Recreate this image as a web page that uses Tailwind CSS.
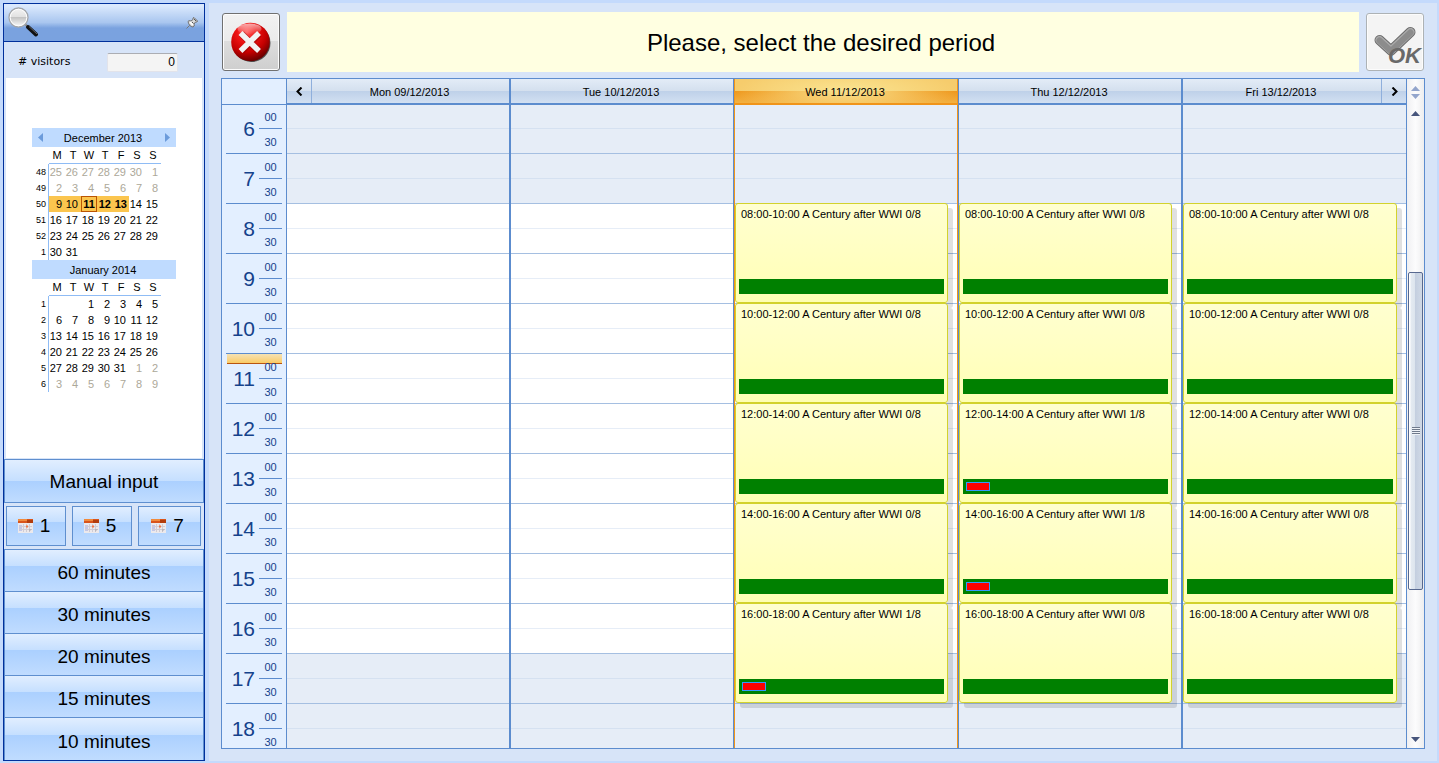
<!DOCTYPE html>
<html lang="en">
<head>
    <meta charset="UTF-8">
    <meta name="viewport" content="width=device-width, initial-scale=1.0">
    <title>Select period</title>
    <script src="https://cdn.jsdelivr.net/npm/@tailwindcss/browser@4"></script>
</head>
<body class="h-screen flex gap-1 pt-[3px] pl-[3px] pr-0.5 pb-0.5 overflow-hidden bg-[#c4dafc] text-black text-[11px] font-['Liberation_Sans',Arial,sans-serif]">

    <!-- Sidebar -->
    <aside class="w-[202px] shrink-0 flex flex-col border border-[#00309c] bg-[#d7e4f8]">
        <div class="h-[38px] shrink-0 flex items-center justify-between pl-1 pr-1.5 border-b border-[#00309c] bg-linear-to-b from-[#dbe9fd] from-5% via-[#a9c6ef] via-50% to-[#7aa2df] to-65%">
            <svg class="w-8 h-8" viewBox="0 0 32 32">
                <defs>
                    <linearGradient id="glass" x1="0" y1="0" x2="0" y2="1">
                        <stop offset="0" stop-color="#f4f4f4"/>
                        <stop offset="0.45" stop-color="#e2e2e2"/>
                        <stop offset="0.5" stop-color="#c4c4c4"/>
                        <stop offset="1" stop-color="#fdfdfd"/>
                    </linearGradient>
                </defs>
                <path d="M17 17l4 4" stroke="#8d8d8d" stroke-width="2"/>
                <path d="M20 20L28 27.500" stroke="#111" stroke-width="4" stroke-linecap="round"/>
                <path d="M21 19.500l8 7.500" stroke="#777" stroke-width="0.800"/>
                <circle cx="10.500" cy="10.500" r="9.500" fill="url(#glass)" stroke="#a3a6aa" stroke-width="1.300"/>
                <circle cx="10.500" cy="10.500" r="8.300" fill="none" stroke="#fff" stroke-width="1"/>
            </svg>
            <button type="button" aria-label="Pin panel">
                <svg class="w-3 h-3" viewBox="0 0 12 12">
                    <path d="M0.500 11.500L4 8" stroke="#777" stroke-width="1"/>
                    <path d="M2 4.500Q2.500 3 5 4L7 2.500Q6.500 0.500 8 0.500L11.500 4Q11.500 5.500 9.500 5L8 7Q9 9.500 7 10Q3 9.500 2 4.500z" fill="#d9d9d9" stroke="#666" stroke-width="0.900"/>
                    <path d="M4 5l3 3" stroke="#fff" stroke-width="1.500"/>
                    <path d="M8 2l2 2M6 5l1.500 1.500" stroke="#555" stroke-width="1"/>
                </svg>
            </button>
        </div>

        <div class="h-9 shrink-0 flex items-center pt-1 pl-3.5 pr-[26px] justify-between">
            <label for="visitors" class="font-['DejaVu_Sans',sans-serif]"># visitors</label>
            <input id="visitors" type="text" value="0" class="w-[71px] h-[19px] px-0.5 text-right text-xs bg-[#f4f4f4] border border-[#e2e3ea] border-t-[#abadb3] rounded-xs">
        </div>

        <div class="flex-1 min-h-0 mx-0.5 mb-px pt-[50px] pl-6.5 bg-white" id="mini-calendars"></div>

        <button type="button" class="h-11 shrink-0 border border-[#5f8fcf] text-[19px] leading-none bg-[linear-gradient(#e1eeff,#c5dfff_50%,#abd0ff_50%,#c0dcff)]">Manual input</button>

        <div class="shrink-0 flex gap-1.5 py-[3px] pl-0.5 pr-[3px]" id="day-buttons"></div>

        <div class="shrink-0 flex flex-col" id="length-buttons"></div>
    </aside>

    <!-- Main panel -->
    <main class="flex-1 min-w-0 flex flex-col gap-1.5 px-3 pt-[9px] pb-3 bg-[#d7e4f8]">
        <div class="shrink-0 flex items-center justify-between gap-[7px] px-px">
            <button type="button" aria-label="Cancel" class="w-[58px] h-[58px] shrink-0 flex items-center justify-center border border-[#707070] rounded-[3px] shadow-[inset_0_0_0_1px_#fcfcfc] bg-[linear-gradient(#f2f2f2,#ebebeb_48%,#dddddd_48%,#cfcfcf)]">
                <svg class="w-[42px] h-[42px]" viewBox="0 0 42 42">
                    <defs>
                        <radialGradient id="ball" cx="0.4" cy="0.25" r="0.8">
                            <stop offset="0" stop-color="#ff5a5a"/>
                            <stop offset="0.3" stop-color="#f01414"/>
                            <stop offset="0.65" stop-color="#c40000"/>
                            <stop offset="1" stop-color="#560000"/>
                        </radialGradient>
                        <linearGradient id="shine" x1="0" y1="0" x2="0" y2="1">
                            <stop offset="0" stop-color="#fff" stop-opacity="0.65"/>
                            <stop offset="1" stop-color="#fff" stop-opacity="0"/>
                        </linearGradient>
                    </defs>
                    <circle cx="21.500" cy="22" r="19" fill="#3a3a3a" opacity="0.85"/>
                    <circle cx="20.500" cy="21" r="19.300" fill="url(#ball)"/>
                    <ellipse cx="19.500" cy="8" rx="12" ry="5.500" fill="url(#shine)"/>
                    <path d="M11.500 13L29 30M29 13L11.500 30" stroke="#8a0000" stroke-width="7" opacity="0.5"/>
                    <path d="M10.500 12L29 30M29 12L10.500 30" stroke="#f2f2f2" stroke-width="5.500"/>
                </svg>
            </button>
            <h1 class="flex-1 h-15 flex items-center justify-center bg-[#ffffe1] text-2xl pt-0.5 pr-1">Please, select the desired period</h1>
            <button type="button" disabled class="relative w-[58px] h-[58px] shrink-0 border border-[#adb2b5] rounded-[3px] shadow-[inset_0_0_0_1px_#fcfcfc] bg-[#f4f4f4]">
                <svg class="w-14 h-14" viewBox="0 0 56 56">
                    <path d="M12.500 26L24 36.500L43.500 18" fill="none" stroke="#6b6b6b" stroke-width="10" stroke-linecap="round" stroke-linejoin="round"/>
                    <path d="M12.500 26L24 36.500L43.500 18" fill="none" stroke="#aaa" stroke-width="8" stroke-linecap="round" stroke-linejoin="round"/>
                    <path d="M12.500 26.500L24 37L43.500 18.500" fill="none" stroke="#8c8c8c" stroke-width="6" stroke-linecap="round" stroke-linejoin="round"/>
                </svg>
                <span class="absolute right-0.5 bottom-1 text-[22px] leading-5 font-bold italic text-[#696969]">OK</span>
            </button>
        </div>

        <!-- Schedule -->
        <section class="flex-1 min-h-0 flex border border-[#5c8cce]">
            <div class="w-16 shrink-0 flex flex-col bg-[#e3efff] text-[#15428b]">
                <div class="relative h-[25px] shrink-0 shadow-[0_1px_0_#5c8cce]"></div>
                <div class="relative flex-1 min-h-0 overflow-hidden px-1" id="hours">
                    <div class="absolute left-[5px] right-1 top-[250px] h-2.5 border-b border-[#b85410] bg-linear-to-b from-[#f5e2b4] to-[#fbcb62]"></div>
                </div>
            </div>
            <div class="flex-1 min-w-0 grid grid-cols-5" id="days"></div>

            <div class="w-[18px] shrink-0 flex flex-col items-center border-l border-[#5c8cce] bg-linear-to-r from-[#f0f0f2] via-[#fcfcfd] to-[#eeeeef]">
                <div class="h-6.5 shrink-0 flex flex-col items-center justify-center gap-[3px]">
                    <svg class="w-[9px] h-[5px]" viewBox="0 0 9 5"><path d="M0 5L4.500 0L9 5z" fill="#93a5cc"/></svg>
                    <svg class="w-[9px] h-[5px]" viewBox="0 0 9 5"><path d="M0 0L4.500 5L9 0z" fill="#93a5cc"/></svg>
                </div>
                <button type="button" aria-label="Scroll up" class="h-4 shrink-0"><svg class="w-[9px] h-[5px]" viewBox="0 0 9 5"><path d="M0 5L4.500 0L9 5z" fill="#47557c"/></svg></button>
                <div class="grow-[152] basis-0"></div>
                <div class="grow-[317] basis-0 w-[15px] flex items-center justify-center border border-[#57688f] rounded-xs bg-[linear-gradient(90deg,#fff_1px,#e4eaf1_2px,#dde5ee_45%,#c3cedf_45%,#d0d9e6)]">
                    <div class="w-2 h-2 bg-[repeating-linear-gradient(#6f7a8c_0_1px,#eef2f7_1px_2px)]"></div>
                </div>
                <div class="grow-[141] basis-0"></div>
                <button type="button" aria-label="Scroll down" class="h-4.5 shrink-0"><svg class="w-[9px] h-[5px]" viewBox="0 0 9 5"><path d="M0 0L4.500 5L9 0z" fill="#47557c"/></svg></button>
            </div>
        </section>
    </main>

    <script>
        // Mini calendars
        const months = [
            { title: 'December 2013', nav: true, first: 25, total: 31, weeks: [48, 49, 50, 51, 52, 1], lead: 6 },
            { title: 'January 2014', nav: false, first: 0, total: 31, weeks: [1, 2, 3, 4, 5, 6], lead: 2 }
        ];
        const selected = [9, 10, 11, 12, 13];

        function monthCells(m) {
            const cells = [];
            for (let i = 0; i < m.lead; i++) cells.push({ day: m.first ? m.first + i : '', dim: true });
            for (let d = 1; d <= m.total; d++) cells.push({ day: d, dim: m.nav && d < 9 });
            for (let d = 1; !m.nav && cells.length < 42; d++) cells.push({ day: d, dim: true });
            while (cells.length < 42) cells.push({ day: '', dim: true });
            return cells;
        }

        function dayCell(cell, m) {
            const hit = m.nav && !cell.dim && selected.includes(cell.day);
            let cls = 'p-0 pr-[3px]';
            if (cell.dim) cls += ' text-[#aca899]';
            if (hit) cls += ' bg-[#fbc54e]';
            if (hit && cell.day > 10) cls = 'p-0 pr-0.5 font-bold bg-[#fbc54e]';
            if (hit && cell.day === 11) cls += ' outline outline-[#bb5503] -outline-offset-1';
            return `<td class="${cls}">${cell.day}</td>`;
        }

        document.querySelector('#mini-calendars').innerHTML = months.map(m => {
            const cells = monthCells(m);
            const rows = m.weeks.map((week, i) => `
                <tr class="h-4">
                    <th scope="row" class="p-0 pr-0.5 border-r border-[#8fbcf5] text-[9px] font-normal text-right">${week}</th>
                    ${cells.slice(i * 7, i * 7 + 7).map(c => dayCell(c, m)).join('')}
                </tr>`).join('');
            return `
                <div class="w-36 h-[19px] flex items-center px-1.5 bg-[#bfdbff]">
                    ${m.nav ? '<button type="button" aria-label="Previous month"><svg class="w-[5px] h-[9px]" viewBox="0 0 5 9"><path d="M5 0L0 4.500L5 9z" fill="#6b9bdb"/></svg></button>' : ''}
                    <span class="flex-1 text-center pt-0.5 pr-0.5">${m.title}</span>
                    ${m.nav ? '<button type="button" aria-label="Next month"><svg class="w-[5px] h-[9px]" viewBox="0 0 5 9"><path d="M0 0L5 4.500L0 9z" fill="#6b9bdb"/></svg></button>' : ''}
                </div>
                <table class="w-[129px] table-fixed border-separate border-spacing-0 leading-[15px] text-right">
                    <thead>
                        <tr class="h-[17px]">
                            <td class="w-[17px] p-0"></td>
                            ${['M', 'T', 'W', 'T', 'F', 'S', 'S'].map(d => `<th scope="col" class="p-0 border-b border-[#8fbcf5] font-normal text-center">${d}</th>`).join('')}
                        </tr>
                    </thead>
                    <tbody>${rows}</tbody>
                </table>`;
        }).join('');

        // Buttons for 1, 5 and 7 days
        document.querySelector('#day-buttons').innerHTML = [1, 5, 7].map(n => `
            <button type="button" class="w-15 last:w-auto last:flex-1 h-10 flex items-center justify-center gap-[7px] pr-1 border border-[#5f8fcf] text-[19px] bg-[linear-gradient(#e1eeff,#c5dfff_40%,#abd0ff_40%,#c0dcff)]">
                <svg class="w-[15px] h-3.5" viewBox="0 0 15 14">
                    <path d="M0 3h15v11h-15z" fill="#ece9ec"/>
                    <path d="M0 0h15v4h-15z" fill="#d9541a"/>
                    <path d="M0 0h9v2h-9z" fill="#f08a3c"/>
                    <path d="M9 1h6v3h-6z" fill="#b23c0c"/>
                    <path d="M1 6h3v6h-3z" fill="#c3c6e6"/>
                    <path d="M5.500 5v8M8.500 5v8M11.500 5v8M1 7.500h13M1 10.500h13" stroke="#d0ccd4" stroke-width="1"/>
                    <path d="M8 6.500h2v2h-2z" fill="#f07a4a"/>
                    <path d="M11 10h3l-3 3z" fill="#b9b6bc"/>
                </svg>
                <span>${n}</span>
            </button>`).join('');

        // Slot lengths
        document.querySelector('#length-buttons').innerHTML = [60, 30, 20, 15, 10].map(n => `
            <button type="button" class="h-[42px] last:h-[43px] border border-b-0 border-[#5f8fcf] pt-1 text-[19px] leading-none bg-[linear-gradient(#e1eeff,#c5dfff_40%,#abd0ff_40%,#c0dcff)]">${n} minutes</button>`).join('');

        // Hours
        const hours = [6, 7, 8, 9, 10, 11, 12, 13, 14, 15, 16, 17, 18];
        document.querySelector('#hours').innerHTML += hours.map(h => `
            <div class="relative h-[50px] flex items-center justify-end gap-1 border-b border-[#5c8cce]">
                <span class="text-[21px] leading-none">${h}</span>
                <div class="w-[23px] h-[49px] text-center">
                    <div class="h-[25px] leading-[26px] border-b border-[#5c8cce]">00</div>
                    <div class="h-6 leading-[26px]">30</div>
                </div>
            </div>`).join('');

        // Days with booked places per event
        const days = [
            { label: 'Mon 09/12/2013' },
            { label: 'Tue 10/12/2013' },
            { label: 'Wed 11/12/2013', today: true, booked: [0, 0, 0, 0, 1] },
            { label: 'Thu 12/12/2013', booked: [0, 0, 1, 1, 0] },
            { label: 'Fri 13/12/2013', booked: [0, 0, 0, 0, 0] }
        ];
        const pad = n => String(n).padStart(2, '0');

        const slots = hours.map(h => {
            const open = h >= 8 && h < 17;
            return `
                <div class="h-[50px] border-b border-[#a5bfe1] ${open ? 'bg-white' : 'bg-[#e6edf7]'}">
                    <div class="h-[25px] border-b ${open ? 'border-[#e6edf7]' : 'border-[#d5e1f1]'}"></div>
                </div>`;
        }).join('');

        function eventBox(booked, i) {
            const start = 8 + i * 2;
            return `
                <article class="absolute left-0 right-[9px] h-[100px] px-[3px] pb-2 flex flex-col justify-between border border-[#d2d22d] rounded-[3px] bg-linear-to-b from-[#ffffd0] to-[#ffffb4] shadow-[5px_5px_0_rgb(0_0_0/0.12)]" style="top: ${(start - 6) * 50 - 1}px">
                    <p class="px-0.5 leading-5 whitespace-nowrap">${pad(start)}:00-${start + 2}:00 A Century after WWI ${booked}/8</p>
                    <div class="h-[15px] p-[3px] bg-[#008000]">
                        ${booked ? '<div class="w-6 h-[9px] bg-[#ff0000] border border-[#3399ff]"></div>' : ''}
                    </div>
                </article>`;
        }

        document.querySelector('#days').innerHTML = days.map((d, i) => {
            const last = i === days.length - 1;
            const line = d.today ? 'border-[#f0941a]' : 'border-[#5c8cce]';
            const head = d.today
                ? 'shadow-[0_1px_0_#f0941a] bg-[radial-gradient(ellipse_50%_100%_at_50%_50%,#fae491,transparent),linear-gradient(#f6cc6c,#f6cc6c_50%,#ee971c_50%,#f3b142)]'
                : 'shadow-[0_1px_0_#5c8cce] bg-[linear-gradient(#e3ecf7,#d3dfee_52%,#bfd1e9_52%,#d2e0f2)]';
            return `
                <div class="min-w-0 min-h-0 flex flex-col border-l ${last ? '' : 'border-r'} ${line}">
                    <div class="relative z-10 h-[25px] shrink-0 flex border-b ${line} ${head}">
                        ${i === 0 ? '<button type="button" aria-label="Previous days" class="w-[25px] flex items-center justify-center border-r border-[#8fafdc]"><svg class="w-[7px] h-[9px]" viewBox="0 0 7 9"><path d="M5.500 0.500L1.500 4.500L5.500 8.500" fill="none" stroke="#000" stroke-width="2"/></svg></button>' : ''}
                        <h2 class="flex-1 text-center leading-[26px] pr-0.5">${d.label}</h2>
                        ${last ? '<button type="button" aria-label="Next days" class="w-[25px] flex items-center justify-center border-l border-[#8fafdc]"><svg class="w-[7px] h-[9px]" viewBox="0 0 7 9"><path d="M1.500 0.500L5.500 4.500L1.500 8.500" fill="none" stroke="#000" stroke-width="2"/></svg></button>' : ''}
                    </div>
                    <div class="relative flex-1 min-h-0 overflow-hidden">
                        ${slots}
                        ${(d.booked || []).map(eventBox).join('')}
                    </div>
                </div>`;
        }).join('');
    </script>
</body>
</html>
